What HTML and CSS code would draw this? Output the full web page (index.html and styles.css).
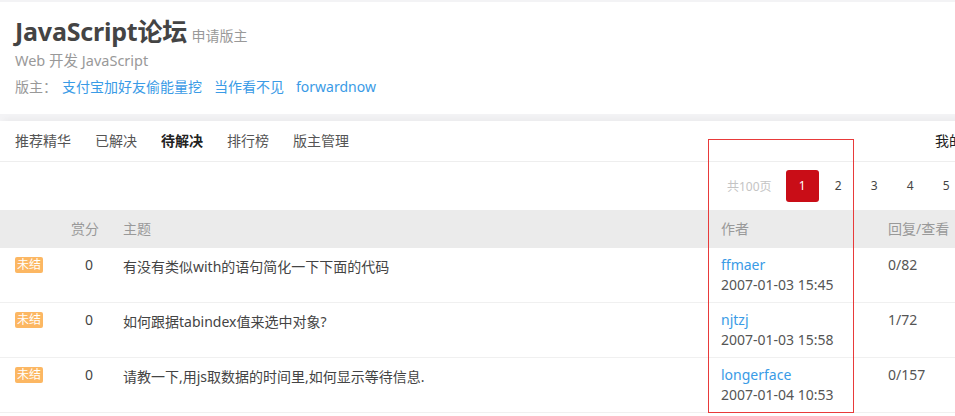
FILE: index.html
```html
<!DOCTYPE html>
<html lang="zh-CN">
<head>
    <meta charset="UTF-8">
    <title>JavaScript论坛</title>
    <link rel="stylesheet" href="styles.css">
</head>
<body>
    <div class="page">
        <div class="forum-head">
            <h1 class="forum-title">JavaScript论坛 <a href="#" class="apply">申请版主</a></h1>
            <div class="forum-path">Web 开发 JavaScript</div>
            <div class="moderators">
                <span class="label">版主：</span>
                <a href="#">支付宝加好友偷能量挖</a>
                <a href="#">当作看不见</a>
                <a href="#">forwardnow</a>
            </div>
        </div>

        <div class="forum-body">
            <div class="tabs">
                <a href="#">推荐精华</a>
                <a href="#">已解决</a>
                <a href="#" class="active">待解决</a>
                <a href="#">排行榜</a>
                <a href="#">版主管理</a>
                <a href="#" class="tabs-right">我的帖子</a>
            </div>

            <div class="pager">
                <span class="total">共100页</span>
                <a href="#" class="current">1</a>
                <a href="#">2</a>
                <a href="#">3</a>
                <a href="#">4</a>
                <a href="#">5</a>
            </div>

            <div class="topic-list">
                <div class="row list-head">
                    <span></span>
                    <span>赏分</span>
                    <span>主题</span>
                    <span>作者</span>
                    <span>回复/查看</span>
                </div>
                <div class="row topic">
                    <span><i class="badge">未结</i></span>
                    <span class="score">0</span>
                    <a href="#" class="subject">有没有类似with的语句简化一下下面的代码</a>
                    <span class="author"><a href="#">ffmaer</a><br>2007-01-03 15:45</span>
                    <span class="count">0/82</span>
                </div>
                <div class="row topic">
                    <span><i class="badge">未结</i></span>
                    <span class="score">0</span>
                    <a href="#" class="subject">如何跟据tabindex值来选中对象?</a>
                    <span class="author"><a href="#">njtzj</a><br>2007-01-03 15:58</span>
                    <span class="count">1/72</span>
                </div>
                <div class="row topic">
                    <span><i class="badge">未结</i></span>
                    <span class="score">0</span>
                    <a href="#" class="subject">请教一下,用js取数据的时间里,如何显示等待信息.</a>
                    <span class="author"><a href="#">longerface</a><br>2007-01-04 10:53</span>
                    <span class="count">0/157</span>
                </div>
            </div>
        </div>

        <div class="highlight"></div>
    </div>
</body>
</html>
```

FILE: styles.css
```css
:root {
    --text: #444;
    --muted: #999;
    --link: #3a9be6;
    --line: #f0f0f0;
}

body {
    margin: 0;
    font-family: "Noto Sans", "Noto Sans CJK SC", sans-serif;
    background: #f3f3f5;
    color: var(--text);
    overflow: hidden;
}

a {
    text-decoration: none;
}

.page {
    position: relative;
    width: 1006px;
    padding-top: 2px;
}

.forum-head {
    background: #fff;
    padding: 12px 15px 15px;
    height: 85px;
}

.forum-title {
    margin: 0;
    font-size: 25px;
    line-height: 34px;
    font-weight: bold;
    color: #444;
    letter-spacing: -0.2px;
}

.forum-title .apply {
    font-size: 14px;
    line-height: 1;
    font-weight: normal;
    color: var(--muted);
    letter-spacing: 0;
    margin-left: -2px;
}

.forum-path {
    font-size: 14.5px;
    line-height: 24px;
    color: var(--muted);
}

.moderators {
    display: flex;
    gap: 12px;
    margin-top: 3px;
    font-size: 14px;
    line-height: 24px;
    color: var(--muted);
}

.moderators .label {
    margin-right: -7px;
}

.moderators a {
    color: var(--link);
}

.forum-body {
    margin-top: 7px;
    padding-bottom: 20px;
    background: #fff;
    box-shadow: 0 -6px 6px -4px rgba(0, 0, 0, 0.04);
}

.tabs {
    display: flex;
    gap: 24px;
    padding: 0 15px;
    height: 40px;
    line-height: 40px;
    border-bottom: 1px solid #eee;
    font-size: 14px;
}

.tabs a {
    color: #555;
}

.tabs a.active {
    color: #222;
    font-weight: bold;
}

.tabs .tabs-right {
    margin-left: auto;
    color: #222;
}

.pager {
    display: flex;
    align-items: center;
    height: 48px;
    padding-left: 727px;
    font-size: 12px;
}

.pager .total {
    color: #c4c4c4;
    margin-right: 14px;
}

.pager a {
    width: 33px;
    height: 32px;
    line-height: 32px;
    text-align: center;
    color: #444;
    margin-right: 3px;
    border-radius: 3px;
}

.pager a.current {
    background: #c90d17;
    color: #fff;
}

.row {
    display: grid;
    grid-template-columns: 56px 52px 598px 167px 1fr;
    padding-left: 15px;
    font-size: 14px;
}

.list-head {
    background: #ebebeb;
    height: 38px;
    line-height: 38px;
    color: var(--muted);
}

.topic {
    padding: 7px 0 7px 15px;
    line-height: 20px;
    border-bottom: 1px solid var(--line);
}

.badge {
    display: inline-block;
    font-style: normal;
    background: #fcb763;
    color: #fff;
    font-size: 12px;
    line-height: 16px;
    padding: 0 2px;
    border-radius: 2px;
    vertical-align: 1px;
}

.score {
    padding-left: 14px;
}

.subject {
    color: var(--text);
    padding-top: 2px;
}

.author {
    color: #555;
}

.author a {
    color: var(--link);
}

.count {
    color: #555;
}

.highlight {
    position: absolute;
    left: 708px;
    top: 139px;
    width: 144px;
    height: 272px;
    border: 1px solid #e83a3a;
}
```
